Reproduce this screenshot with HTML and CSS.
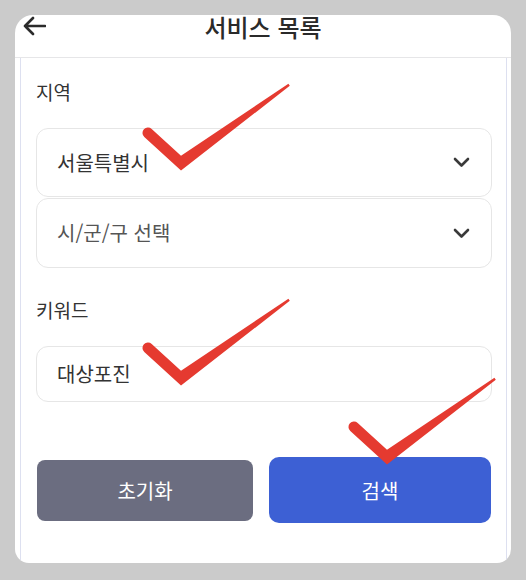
FILE: index.html
```html
<!DOCTYPE html>
<html lang="ko">
<head>
<meta charset="utf-8">
<title>서비스 목록</title>
<link rel="stylesheet" href="styles.css">
</head>
<body>
<div class="card">
  <header class="header">
    <svg class="back" width="24" height="20" viewBox="0 0 24 20" aria-hidden="true">
      <path d="M23 10H3M11 2L3 10L11 18" fill="none" stroke="#2b2b2b" stroke-width="2.6" stroke-linecap="round" stroke-linejoin="round"/>
    </svg>
    <h1 class="title">서비스 목록</h1>
    <span class="spacer"></span>
  </header>
  <main class="panel">
    <div class="label">지역</div>
    <div class="selects">
      <div class="field select">
        <span class="value">서울특별시</span>
        <svg class="chev" width="17" height="11" viewBox="0 0 17 11" aria-hidden="true"><path d="M2 2L8.5 8.5L15 2" fill="none" stroke="#3a3a3a" stroke-width="2.6" stroke-linecap="round" stroke-linejoin="round"/></svg>
      </div>
      <div class="field select tall">
        <span class="value placeholder">시/군/구 선택</span>
        <svg class="chev" width="17" height="11" viewBox="0 0 17 11" aria-hidden="true"><path d="M2 2L8.5 8.5L15 2" fill="none" stroke="#3a3a3a" stroke-width="2.6" stroke-linecap="round" stroke-linejoin="round"/></svg>
      </div>
    </div>
    <div class="label label-kw">키워드</div>
    <div class="field input">
      <span class="value">대상포진</span>
    </div>
    <div class="actions">
      <button class="btn btn-reset" type="button">초기화</button>
      <button class="btn btn-search" type="button">검색</button>
    </div>
  </main>
</div>
<svg class="marks" width="526" height="580" viewBox="0 0 526 580" aria-hidden="true">
  <defs>
    <path id="check" d="M-36.7 -25.9A5.5 5.5 0 0 1 -29.3 -34.1L0 -7.2L107.4 -79.2L108.8 -77.2L0 7.4Z"/>
  </defs>
  <use href="#check" transform="translate(181 163)" fill="#e53a30"/>
  <use href="#check" transform="translate(181 378)" fill="#e53a30"/>
  <use href="#check" transform="translate(387 457)" fill="#e53a30"/>
</svg>
</body>
</html>
```
FILE: styles.css
```css
* { box-sizing: border-box; }

html, body {
  margin: 0;
  padding: 0;
}

body {
  width: 526px;
  height: 580px;
  background: #cbcbcb;
  font-family: "Noto Sans CJK KR", "Noto Sans", sans-serif;
  color: #333;
  position: relative;
  overflow: hidden;
  padding: 15px 15px 0 15px;
}

.card {
  width: 496px;
  height: 548px;
  background: #fff;
  border-radius: 18px 18px 14px 14px;
  overflow: hidden;
  display: flex;
  flex-direction: column;
}

.header {
  height: 43px;
  flex: 0 0 43px;
  border-bottom: 1px solid #e6e6e8;
  display: grid;
  grid-template-columns: 40px 1fr 40px;
  align-items: start;
  padding: 0 0 0 7px;
}

.back {
  display: block;
  margin-top: 1px;
}

.title {
  margin: -3px 0 0 -7px;
  font-size: 24px;
  line-height: 30px;
  font-weight: 500;
  text-align: center;
  color: #2a2a2a;
  letter-spacing: 0;
}

.panel {
  flex: 1;
  margin: 0 4px 0 5px;
  border-left: 1px solid #dde0f0;
  border-right: 1px solid #dde0f0;
  padding: 21px 14px 0 15px;
  display: flex;
  flex-direction: column;
}

.label {
  font-size: 19px;
  line-height: 26px;
  color: #333;
}

.label-kw {
  margin-top: 29px;
}

.selects {
  margin-top: 23px;
  display: flex;
  flex-direction: column;
  gap: 1px;
}

.field {
  border: 1px solid #e6e6e6;
  border-radius: 12px;
  display: flex;
  align-items: center;
  justify-content: space-between;
  padding: 0 21px 0 20px;
  background: #fff;
}

.select { height: 69px; }
.select.tall { height: 70px; }

.input {
  margin-top: 23px;
  height: 56px;
}

.value {
  font-size: 20px;
  line-height: 26px;
  color: #333;
}

.value.placeholder {
  color: #555;
}

.chev {
  display: block;
}

.actions {
  margin-top: 55px;
  display: flex;
  align-items: center;
  gap: 16px;
  padding-left: 1px;
}

.btn {
  border: 0;
  color: #fff;
  font-family: "Noto Sans CJK KR", "Noto Sans", sans-serif;
  font-size: 20px;
  font-weight: 400;
  display: flex;
  align-items: center;
  justify-content: center;
  padding: 0;
}

.btn-reset {
  flex: 0 0 216px;
  height: 61px;
  background: #6b6d80;
  border-radius: 8px;
}

.btn-search {
  flex: 0 0 222px;
  height: 66px;
  background: #3d60d4;
  border-radius: 10px;
}

.marks {
  position: absolute;
  left: 0;
  top: 0;
  pointer-events: none;
}
```
